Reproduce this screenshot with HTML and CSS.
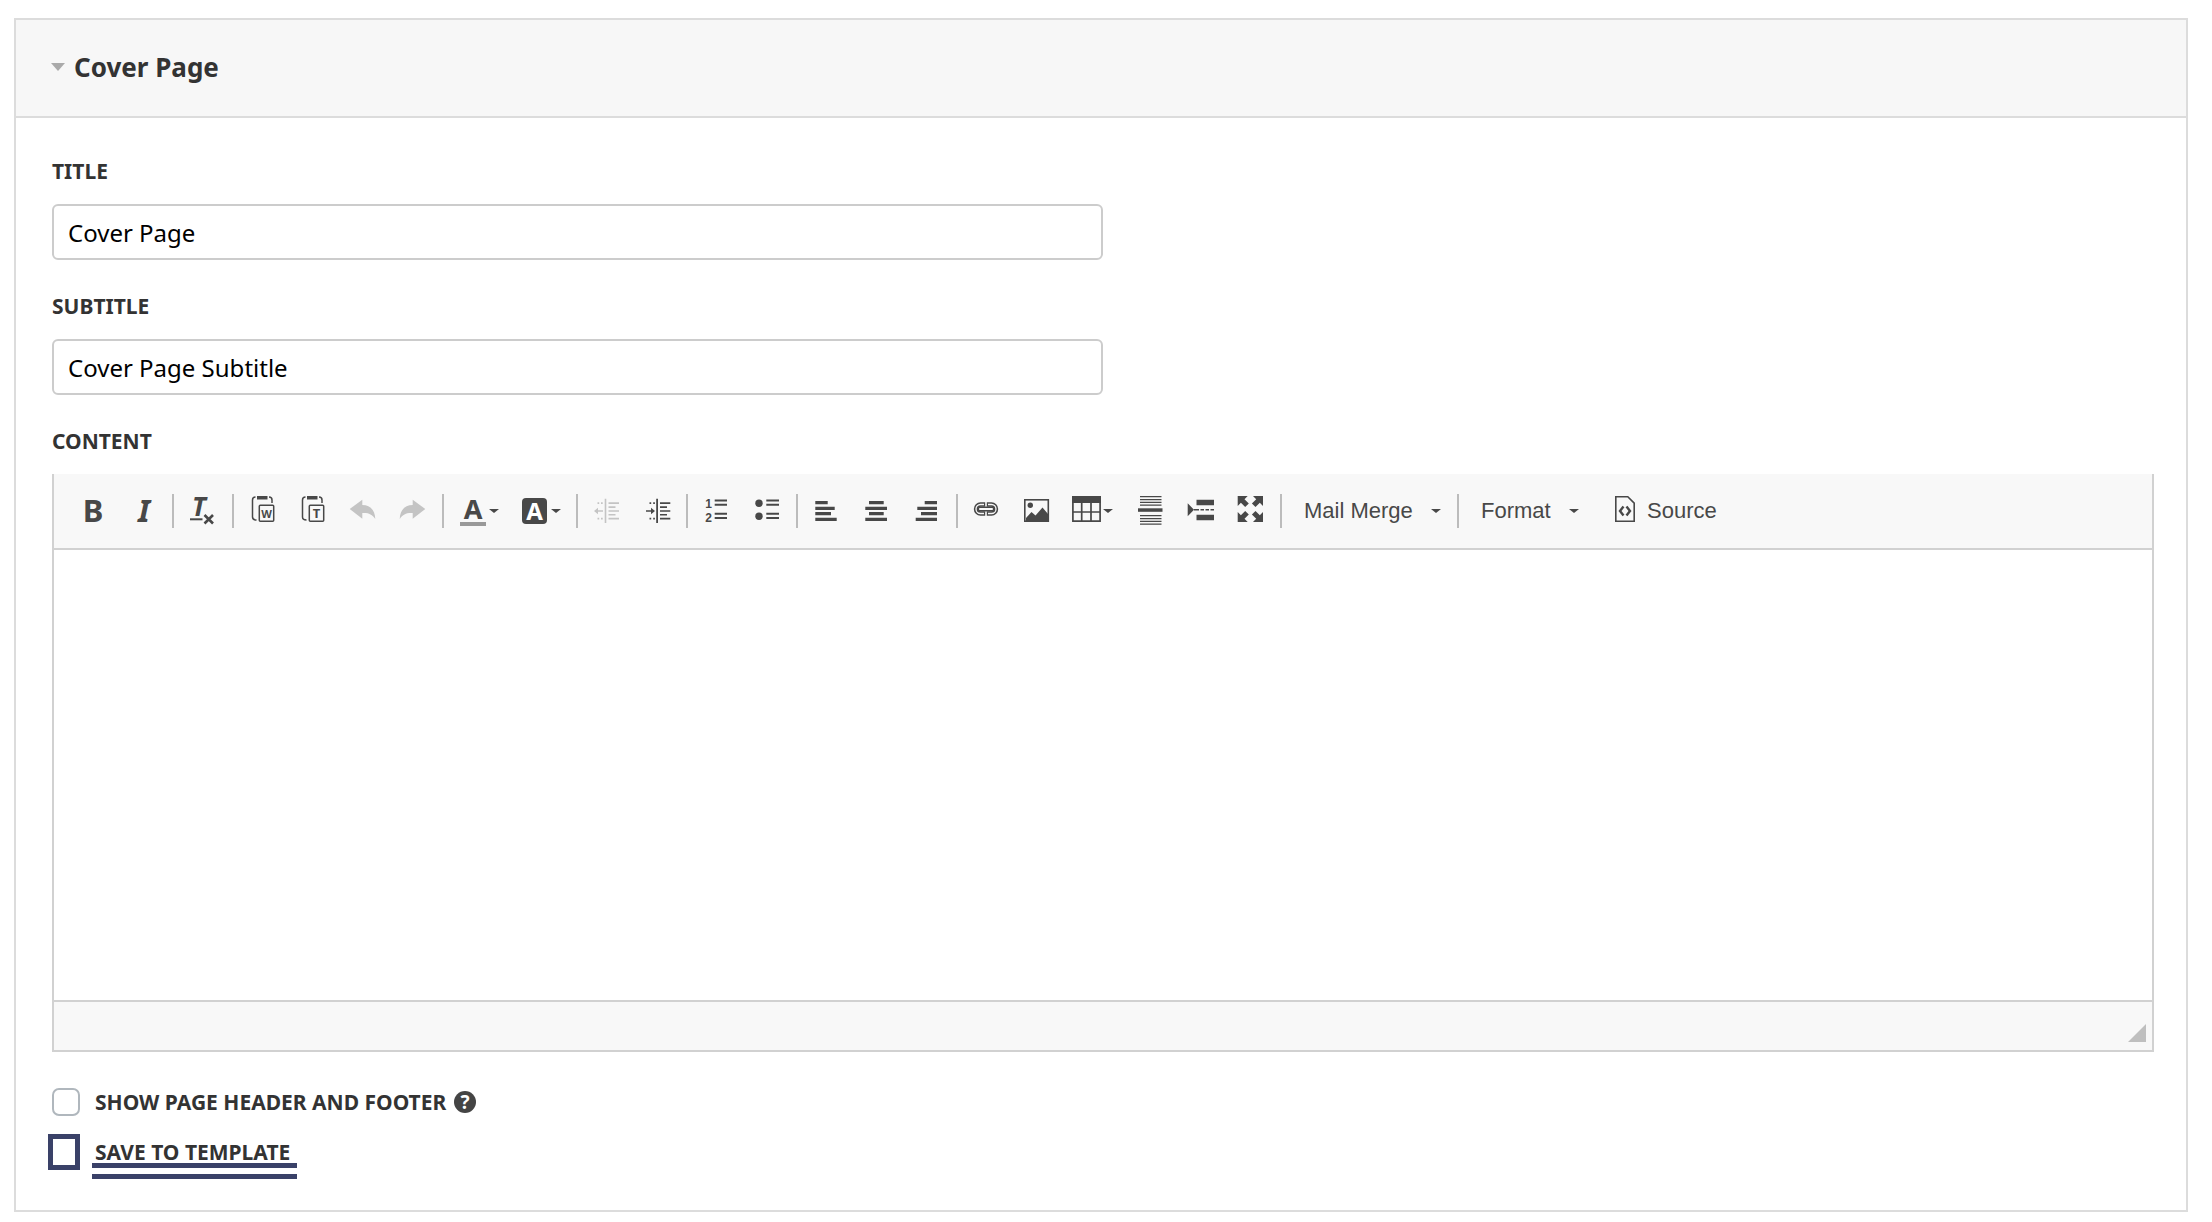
FILE: index.html
```
<!DOCTYPE html>
<html lang="en">

<head>
    <meta charset="UTF-8" />
    <meta name="viewport" content="width=device-width, initial-scale=1.0" />
    <title>Cover Page</title>
    <link rel="stylesheet" href="styles.css">
</head>

<body>
    <section class="panel">
        <header class="panel-header">
            <svg class="toggle" viewBox="0 0 14 8"><path d="M0 0h14l-7 8z" /></svg>
            <h2>Cover Page</h2>
        </header>

        <form class="panel-body">
            <div class="field">
                <label for="title">TITLE</label>
                <input type="text" id="title" value="Cover Page">
            </div>

            <div class="field">
                <label for="subtitle">SUBTITLE</label>
                <input type="text" id="subtitle" value="Cover Page Subtitle">
            </div>

            <label for="content">CONTENT</label>
            <div class="editor">
                <div class="toolbar">
                    <button type="button" class="tool" aria-label="Bold">
                        <svg class="icon" viewBox="0 0 32 32"><text x="16" y="27" font-size="31">B</text></svg>
                    </button>
                    <button type="button" class="tool" aria-label="Italic">
                        <svg class="icon" viewBox="0 0 32 32"><text x="17" y="27" font-size="31" font-style="italic">I</text></svg>
                    </button>
                    <span class="separator"></span>

                    <button type="button" class="tool" aria-label="Remove format">
                        <svg class="icon" viewBox="0 0 32 32">
                            <text x="12" y="21" font-size="26" font-style="italic">T</text>
                            <path d="M3 23.3h12.5v2H3z" />
                            <path class="line" stroke-width="2.6" d="M17.5 20l8.5 8.5M26 20l-8.5 8.5" />
                        </svg>
                    </button>
                    <span class="separator"></span>

                    <button type="button" class="tool" aria-label="Paste from Word">
                        <svg class="icon" viewBox="0 0 32 32">
                            <path class="line" stroke-width="1.5" d="M8.5 2C6.5 2 5.5 3 5.5 5v17c0 2 1 3 4 3M22 2c2 0 3 1 3 3v3" />
                            <path d="M10 1h10.5v3.5H10z" />
                            <rect class="line" stroke-width="1.5" x="12.3" y="10.3" width="14.4" height="16" rx="1" />
                            <text x="19.5" y="22.5" font-size="11">W</text>
                        </svg>
                    </button>
                    <button type="button" class="tool" aria-label="Paste as plain text">
                        <svg class="icon" viewBox="0 0 32 32">
                            <path class="line" stroke-width="1.5" d="M8.5 2C6.5 2 5.5 3 5.5 5v17c0 2 1 3 4 3M22 2c2 0 3 1 3 3v3" />
                            <path d="M10 1h10.5v3.5H10z" />
                            <rect class="line" stroke-width="1.5" x="12.3" y="10.3" width="14.4" height="16" rx="1" />
                            <text x="19.5" y="23" font-size="13">T</text>
                        </svg>
                    </button>
                    <button type="button" class="tool" aria-label="Undo" disabled>
                        <svg class="icon" viewBox="0 0 32 32"><path d="M2.7 14L15.3 4.7V10C23 10 28 15 28.3 24 25 19 21 17.5 15.3 18v5.7z" /></svg>
                    </button>
                    <button type="button" class="tool" aria-label="Redo" disabled>
                        <svg class="icon" viewBox="0 0 32 32"><path d="M28.3 14L15.7 4.7V10C8 10 3 15 2.7 24 6 19 10 17.5 15.7 18v5.7z" /></svg>
                    </button>
                    <span class="separator"></span>

                    <button type="button" class="tool has-menu" aria-label="Text color">
                        <svg class="icon" viewBox="0 0 32 32">
                            <text x="16" y="24" font-size="27">A</text>
                            <path class="swatch" d="M3 27h26v4H3z" />
                        </svg>
                        <svg class="arrow" viewBox="0 0 10 4"><path d="M0 0h10L5 4z" /></svg>
                    </button>
                    <button type="button" class="tool has-menu" aria-label="Background color">
                        <svg class="icon" viewBox="0 0 32 32">
                            <rect x="3" y="3" width="25" height="26" rx="4" />
                            <text class="inverse" x="15.5" y="24.5" font-size="24">A</text>
                        </svg>
                        <svg class="arrow" viewBox="0 0 10 4"><path d="M0 0h10L5 4z" /></svg>
                    </button>
                    <span class="separator"></span>

                    <button type="button" class="tool" aria-label="Decrease indent" disabled>
                        <svg class="icon" viewBox="0 0 32 32">
                            <path d="M13.7 3.7h1.6V28h-1.6zM17.5 7.3H28v1.6H17.5zM17.5 11.3h7v1.6h-7zM17.5 15.2H28v1.6H17.5zM17.5 19h7v1.6h-7zM17.5 22.8H28v1.6H17.5z" />
                            <path d="M6.5 7.3h1.7v1.6H6.5zM10 7.3h1.7v1.6H10zM6.5 22.8h1.7v1.6H6.5zM10 22.8h1.7v1.6H10zM3 16l4-3.2v2.4h5v1.6H7v2.4z" />
                        </svg>
                    </button>
                    <button type="button" class="tool" aria-label="Increase indent">
                        <svg class="icon" viewBox="0 0 32 32">
                            <path d="M15.2 3.7H17V28h-1.8zM19 7.3h10.3v1.6H19zM19 11.3h7v1.6h-7zM19 15.2h10.3v1.6H19zM19 19h7v1.6h-7zM19 22.8h10.3v1.6H19z" />
                            <path d="M8.5 7.3h1.7v1.6H8.5zM12.2 7.3h1.7v1.6h-1.7zM8.5 22.8h1.7v1.6H8.5zM12.2 22.8h1.7v1.6h-1.7zM14 16l-4-3.2v2.4H5v1.6h5v2.4z" />
                        </svg>
                    </button>
                    <span class="separator"></span>

                    <button type="button" class="tool" aria-label="Numbered list">
                        <svg class="icon digits" viewBox="0 0 32 32">
                            <text x="7.5" y="13" font-size="12">1</text>
                            <text x="7.5" y="27" font-size="12">2</text>
                            <path d="M13.7 4.5H26v2H13.7zM13.7 8.7H26v2H13.7zM13.7 17.7H26v2H13.7zM13.7 22H26v2H13.7z" />
                        </svg>
                    </button>
                    <button type="button" class="tool" aria-label="Bulleted list">
                        <svg class="icon" viewBox="0 0 32 32">
                            <circle cx="8" cy="8.3" r="3.7" />
                            <circle cx="8" cy="21.3" r="3.7" />
                            <path d="M15.3 4.5H28v2H15.3zM15.3 8.7H28v2H15.3zM15.3 17.7H28v2H15.3zM15.3 22H28v2H15.3z" />
                        </svg>
                    </button>
                    <span class="separator"></span>

                    <button type="button" class="tool" aria-label="Align left">
                        <svg class="icon" viewBox="0 0 32 32"><path d="M4.3 6h12.4v3.3H4.3zM4.3 11.7h19.4V15H4.3zM4.3 17H20v3.3H4.3zM4.3 22.7h21.4V26H4.3z" /></svg>
                    </button>
                    <button type="button" class="tool" aria-label="Align center">
                        <svg class="icon" viewBox="0 0 32 32"><path d="M8 6h14.7v3.3H8zM4.3 11.7H26V15H4.3zM8 17h14.7v3.3H8zM4.3 22.7H26V26H4.3z" /></svg>
                    </button>
                    <button type="button" class="tool" aria-label="Align right">
                        <svg class="icon" viewBox="0 0 32 32"><path d="M13.7 6H26v3.3H13.7zM6.3 11.7H26V15H6.3zM10 17h16v3.3H10zM4.7 22.7H26V26H4.7z" /></svg>
                    </button>
                    <span class="separator"></span>

                    <button type="button" class="tool" aria-label="Link">
                        <svg class="icon" viewBox="0 0 32 32">
                            <path class="line" stroke-width="4.4" d="M14.2 9.5H9.5a4.5 4.5 0 0 0 0 9h4.7M15.8 9.5h4.700a4.5 4.5 0 0 1 0 9h-4.700" />
                            <path class="line hollow" stroke-width="1.3" d="M13 9.5H9.5a4.5 4.5 0 0 0 0 9H13M17 9.5h3.500a4.5 4.500 0 0 1 0 9H17" />
                            <rect class="bar" x="7.5" y="12.3" width="15" height="3.4" rx="1" />
                        </svg>
                    </button>
                    <button type="button" class="tool" aria-label="Image">
                        <svg class="icon" viewBox="0 0 32 32">
                            <rect class="line" stroke-width="1.6" x="3.8" y="4.8" width="23.5" height="21.4" />
                            <circle cx="9.3" cy="10.3" r="2.7" />
                            <path d="M5 25v-2l5.5-6 4 3.5 7-8L27 19v7H5z" />
                        </svg>
                    </button>
                    <button type="button" class="tool has-menu wide" aria-label="Table">
                        <svg class="icon" viewBox="0 0 32 32">
                            <path d="M1 1h29v7H1z" />
                            <path class="line" stroke-width="1.7" d="M1.9 7v19.2h27.2V7M10.7 8v18M20 8v18M2 17h27" />
                        </svg>
                        <svg class="arrow" viewBox="0 0 10 4"><path d="M0 0h10L5 4z" /></svg>
                    </button>
                    <button type="button" class="tool" aria-label="Horizontal line">
                        <svg class="icon" viewBox="0 0 32 32">
                            <path d="M3 13.3h24.5v3.5H3z" />
                            <path d="M5 1h21.5v1.3H5zM5 4h21.5v1.3H5zM5 6.7h21.5V8H5zM5 9.5h21.5v1.3H5zM5 20h21.5v1.3H5zM5 23h21.5v1.3H5zM5 25.7h21.5V27H5zM5 28.5h21.5v1.3H5z" />
                        </svg>
                    </button>
                    <button type="button" class="tool" aria-label="Page break">
                        <svg class="icon" viewBox="0 0 32 32"><path d="M2.7 8.3L9 14.7l-6.3 6.6zM11.5 4.7H29v5.6H11.5zM11.5 19.7H29v5.6H11.5zM9 14h5v1.5H9zM15.5 14H19v1.5h-3.5zM20.5 14H24v1.5h-3.5zM25.5 14H29v1.5h-3.5z" /></svg>
                    </button>
                    <button type="button" class="tool" aria-label="Maximize">
                        <svg class="icon" viewBox="0 0 32 32"><path d="M2.7 1h10L9.5 4.2l4.3 4.3-3.6 3.6-4.3-4.3L2.7 11zM28 1H18l3.2 3.2-4.3 4.3 3.6 3.6 4.3-4.3L28 11zM2.7 27h10l-3.2-3.2 4.3-4.3-3.6-3.6-4.3 4.3L2.7 17zM28 27H18l3.2-3.2-4.3-4.3 3.6-3.6 4.3 4.3L28 17z" /></svg>
                    </button>
                    <span class="separator"></span>

                    <div class="combo">
                        <select aria-label="Mail Merge"><option>Mail Merge</option></select>
                        <svg class="arrow" viewBox="0 0 10 4"><path d="M0 0h10L5 4z" /></svg>
                    </div>
                    <span class="separator"></span>
                    <div class="combo">
                        <select aria-label="Format"><option>Format</option></select>
                        <svg class="arrow" viewBox="0 0 10 4"><path d="M0 0h10L5 4z" /></svg>
                    </div>
                    <button type="button" class="tool source">
                        <svg class="icon" viewBox="0 0 32 32">
                            <path class="line" stroke-width="1.6" d="M6.8 1.8h12l6.4 6.4v18H6.8z" />
                            <path class="line" stroke-width="2.4" d="M14.500 11.500L11 16l3.500 4.500M17.500 11.500L21 16l-3.500 4.500" />
                        </svg>
                        Source
                    </button>
                </div>

                <textarea id="content"></textarea>

                <div class="editor-footer">
                    <svg class="resizer" viewBox="0 0 18 18"><path d="M18 0v18H0z" /></svg>
                </div>
            </div>

            <div class="options">
                <div class="option">
                    <input type="checkbox" id="showHeader">
                    <label for="showHeader">SHOW PAGE HEADER AND FOOTER</label>
                    <svg class="help" viewBox="0 0 22 22">
                        <circle cx="11" cy="11" r="11" />
                        <text class="inverse" x="11" y="18" font-size="19">?</text>
                    </svg>
                </div>
                <div class="option highlighted">
                    <input type="checkbox" id="saveTemplate">
                    <label for="saveTemplate">SAVE TO TEMPLATE</label>
                </div>
            </div>
        </form>
    </section>
</body>

</html>
```
FILE: styles.css
```
*,
*::after {
    box-sizing: border-box;
}

body {
    font-family: Tahoma, 'Noto Sans', sans-serif;
    margin: 0;
    padding: 18px 24px 10px 14px;
    background: #fff;
    color: #333;
}

.panel {
    border: 2px solid #dcdcdc;
}

.panel-header {
    display: flex;
    align-items: center;
    gap: 9px;
    height: 98px;
    padding: 0 35px 2px;
    background: #f7f7f7;
    border-bottom: 2px solid #dcdcdc;
}

.panel-header h2 {
    margin: 0;
    font-size: 26px;
    line-height: 32px;
}

.toggle {
    width: 14px;
    height: 8px;
    fill: #aaa;
}

.panel-body {
    padding: 38px 32px 38px 36px;
}

label {
    display: block;
    font-size: 21px;
    font-weight: bold;
    line-height: 30px;
}

.field {
    width: 50%;
    margin-bottom: 31px;
}

.field input {
    display: block;
    width: 100%;
    height: 56px;
    margin-top: 18px;
    padding: 0 14px;
    border: 2px solid #ccc;
    border-radius: 6px;
    background: #fff;
    color: #000;
    font-family: inherit;
    font-size: 24px;
}

.editor {
    margin-top: 18px;
    border: 2px solid #d1d1d1;
    border-top: none;
}

.toolbar {
    display: flex;
    align-items: center;
    height: 76px;
    padding: 0 14px;
    background: #f8f8f8;
    border-bottom: 2px solid #d1d1d1;
}

.separator {
    width: 2px;
    height: 34px;
    margin: 0 4px;
    background: #bcbcbc;
}

.tool {
    display: flex;
    align-items: center;
    width: 50px;
    height: 50px;
    padding: 0 9px;
    border: none;
    background: none;
    color: #484848;
}

.tool:disabled {
    color: #c4c4c4;
}

.has-menu {
    width: 62px;
    padding-right: 0;
}

.wide {
    width: 64px;
}

.icon {
    flex-shrink: 0;
    width: 32px;
    height: 32px;
    overflow: visible;
    fill: currentColor;
}

.icon text,
.help text {
    font-family: 'Noto Sans', sans-serif;
    font-weight: bold;
    text-anchor: middle;
}

.digits text {
    font-family: 'Liberation Sans', Arial, sans-serif;
}

.icon .line {
    fill: none;
    stroke: currentColor;
}

.icon .hollow {
    stroke: #f8f8f8;
}

.icon .bar {
    fill: #f8f8f8;
    stroke: currentColor;
    stroke-width: 1.4;
}

.icon .swatch {
    fill: #999;
}

.icon .inverse,
.help .inverse {
    fill: #fff;
}

.arrow {
    flex-shrink: 0;
    width: 10px;
    height: 4px;
    fill: #484848;
}

.combo {
    display: grid;
    align-items: center;
}

.combo select,
.combo .arrow {
    grid-area: 1 / 1;
}

.combo select {
    appearance: none;
    height: 50px;
    padding: 0 40px 2px 18px;
    border: none;
    background: none;
    color: #484848;
    font-family: 'Liberation Sans', Arial, sans-serif;
    font-size: 22px;
}

.combo .arrow {
    justify-self: end;
    margin-right: 12px;
    pointer-events: none;
}

.source {
    gap: 6px;
    width: auto;
    padding: 0 18px;
    font-family: 'Liberation Sans', Arial, sans-serif;
    font-size: 22px;
}

.editor textarea {
    display: block;
    width: 100%;
    height: 450px;
    padding: 20px;
    border: none;
    resize: none;
    font-family: inherit;
    font-size: 24px;
}

.editor-footer {
    display: flex;
    align-items: flex-end;
    justify-content: flex-end;
    height: 50px;
    padding: 8px 6px;
    background: #f8f8f8;
    border-top: 2px solid #d1d1d1;
}

.resizer {
    width: 18px;
    height: 18px;
    fill: #bfbfbf;
}

.options {
    display: grid;
    gap: 10px;
    margin-top: 30px;
}

.option {
    display: flex;
    align-items: center;
    height: 40px;
}

.option input {
    appearance: none;
    width: 28px;
    height: 28px;
    margin: 0 15px 0 0;
    border: 2px solid #b0b7bd;
    border-radius: 7px;
    background: #fff;
}

.help {
    width: 22px;
    height: 22px;
    margin-left: 8px;
    overflow: visible;
    fill: #444;
}

.highlighted input {
    width: 32px;
    height: 36px;
    margin: 0 12px 0 -4px;
    border: 5px solid #3a4168;
    border-radius: 0;
}

/* double rule under the label */
.highlighted label {
    position: relative;
    padding: 0 3px;
}

.highlighted label::after {
    content: "";
    position: absolute;
    top: 26px;
    left: 0;
    right: -4px;
    height: 16px;
    border-top: 5px solid #3a4168;
    border-bottom: 5px solid #3a4168;
}
```
